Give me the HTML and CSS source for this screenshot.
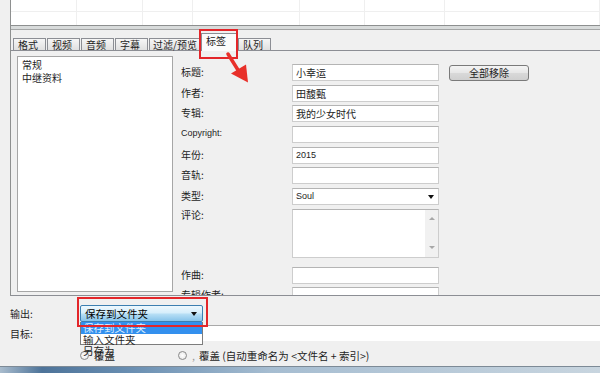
FILE: index.html
```html
<!DOCTYPE html>
<html lang="zh-CN">
<head>
    <meta charset="UTF-8">
    <meta name="viewport" content="width=device-width, initial-scale=1.0">
    <title>标签</title>
    <link rel="stylesheet" href="styles.css">
</head>
<body>
    <div class="window">
        <div class="main">
            <div class="file-grid">
                <span></span><span></span><span></span><span></span><span></span><span></span><span></span>
                <span></span><span></span><span></span><span></span><span></span><span></span><span></span>
            </div>
            <div class="splitter"></div>
            <div class="tab-bar">
                <div class="tab">格式</div>
                <div class="tab">视频</div>
                <div class="tab">音频</div>
                <div class="tab">字幕</div>
                <div class="tab wide">过滤/预览</div>
                <div class="tab active">标签<span class="mark-box tab-mark"></span></div>
                <div class="tab">队列</div>
            </div>
            <div class="tab-panel">
                <ul class="side-list">
                    <li>常规</li>
                    <li>中继资料</li>
                </ul>
                <div class="tag-form">
                    <div class="button">全部移除</div>
                    <label>标题:</label><div class="field">小幸运</div>
                    <label>作者:</label><div class="field">田馥甄</div>
                    <label>专辑:</label><div class="field">我的少女时代</div>
                    <label class="latin">Copyright:</label><div class="field"></div>
                    <label>年份:</label><div class="field latin">2015</div>
                    <label>音轨:</label><div class="field"></div>
                    <label>类型:</label><div class="field select latin">Soul<span class="caret"></span></div>
                    <label class="top">评论:</label>
                    <div class="field memo">
                        <div class="scrollbar"><span class="up"></span><span class="down"></span></div>
                    </div>
                    <label>作曲:</label><div class="field"></div>
                    <label>专辑作者:</label><div class="field"></div>
                </div>
            </div>
        </div>

        <div class="output">
            <div class="out-row">
                <label>输出:</label>
                <div class="combo-wrap">
                    <div class="combo">保存到文件夹<span class="caret"></span></div>
                    <ul class="drop-list">
                        <li class="hl">保存到文件夹</li>
                        <li>输入文件夹</li>
                        <li class="spill">另存为</li>
                    </ul>
                    <span class="mark-box combo-mark"></span>
                </div>
            </div>
            <div class="out-row target-row">
                <label>目标:</label>
                <div class="target"></div>
            </div>
            <div class="radio-row">
                <div class="radio-item first"><span class="radio"></span>覆盖</div>
                <div class="radio-item"><span class="radio"></span><span class="dim">,</span>覆盖 (自动重命名为 &lt;文件名 + 索引&gt;)</div>
            </div>
        </div>
        <div class="taskbar"></div>

        <svg class="arrow" viewBox="220 48 40 40" width="40" height="40">
            <line x1="228" y1="54" x2="238" y2="70" stroke="#e8302a" stroke-width="3.5" stroke-linecap="round"/>
            <polygon points="231,73.5 246,64.5 248,82.5" fill="#e8302a"/>
        </svg>
    </div>
</body>
</html>
```

FILE: styles.css
```css
body {
    margin: 0;
    background-color: #f0f0f0;
    font-family: "Noto Sans CJK SC", "Liberation Sans", sans-serif;
    font-size: 10px;
    color: #1e1e1e;
}

.window {
    position: relative;
    width: 600px;
    height: 373px;
    display: flex;
    flex-direction: column;
    overflow: hidden;
}

.main {
    margin-left: 10px;
    border-left: 1px solid #8e9090;
}

.file-grid {
    height: 25px;
    background-color: #fff;
    display: grid;
    grid-template-columns: 66px 66px 50px 107px 65px 80px 1fr;
    grid-template-rows: 12px 13px;
}

.file-grid span {
    border-right: 1px solid #efefef;
    border-bottom: 1px solid #efefef;
}

.file-grid span:nth-child(n+8) {
    border-bottom: none;
}

.splitter {
    height: 3px;
    background-color: #d8dbdb;
    border-top: 1px solid #8d8f8f;
    border-bottom: 1px solid #a4a6a6;
}

.tab-bar {
    height: 20px;
    display: flex;
    align-items: flex-end;
    padding-left: 2px;
}

.tab {
    position: relative;
    width: 33px;
    height: 12px;
    line-height: 11px;
    padding-left: 4px;
    margin-right: 1px;
    box-sizing: border-box;
    border: 1px solid #8c8e94;
    border-bottom: none;
    background: linear-gradient(#f6f6f6, #e0e0e0);
    white-space: nowrap;
}

.tab.wide {
    width: 51px;
    padding-left: 3px;
}

.tab.active {
    width: 37px;
    height: 18px;
    line-height: 13px;
    margin-bottom: -1px;
    margin-right: 0;
    background: #fbfbfb;
    z-index: 1;
}

.mark-box {
    position: absolute;
    border: 2px solid #e3262a;
    box-sizing: border-box;
    z-index: 3;
}

.tab-mark {
    left: -3px;
    top: -5px;
    width: 39px;
    height: 30px;
}

.tab-panel {
    height: 246px;
    box-sizing: border-box;
    border-top: 1px solid #8c8e94;
    border-bottom: 1px solid #8c8e94;
    display: flex;
    overflow: hidden;
}

.side-list {
    width: 156px;
    height: 236px;
    margin: 5px 0 0 6px;
    padding: 1px 0 0;
    box-sizing: border-box;
    list-style: none;
    background-color: #fff;
    border: 1px solid #a6a6a6;
}

.side-list li {
    height: 13px;
    line-height: 13px;
    padding-left: 4px;
}

.tag-form {
    margin-left: 8px;
    padding-top: 13px;
    display: grid;
    grid-template-columns: 101px 147px 80px;
    grid-template-rows: repeat(7, 17px) 54px 17px 17px;
    column-gap: 10px;
    row-gap: 3.7px;
    align-content: start;
}

.tag-form label {
    grid-column: 1;
    line-height: 15px;
    align-self: center;
    padding-bottom: 2px;
    white-space: nowrap;
}

.tag-form label.top {
    align-self: start;
    line-height: 12px;
    padding: 0;
}

.latin {
    font-family: "Liberation Sans", "Noto Sans CJK SC", sans-serif;
    font-size: 9px;
}

.field {
    grid-column: 2;
    height: 17px;
    line-height: 15px;
    padding-left: 3px;
    box-sizing: border-box;
    background-color: #fff;
    border: 1px solid #cdcdcd;
    border-top-color: #b4b4b4;
}

.field.select {
    display: flex;
    justify-content: space-between;
    align-items: center;
}

.caret {
    width: 0;
    height: 0;
    border-left: 3px solid transparent;
    border-right: 3px solid transparent;
    border-top: 4px solid #111;
    margin-right: 4px;
}

.field.memo {
    height: 49px;
    padding: 0;
    display: flex;
    justify-content: flex-end;
}

.scrollbar {
    width: 13px;
    background-color: #f1f1f1;
    display: flex;
    flex-direction: column;
    justify-content: space-between;
    align-items: center;
    padding: 7px 0 8px;
}

.scrollbar span {
    width: 0;
    height: 0;
    border-left: 3px solid transparent;
    border-right: 3px solid transparent;
}

.scrollbar .up {
    border-bottom: 3px solid #a8a8a8;
}

.scrollbar .down {
    border-top: 3px solid #a8a8a8;
}

.button {
    grid-column: 3;
    grid-row: 1;
    height: 16px;
    margin-top: 1px;
    box-sizing: border-box;
    border: 1px solid #7a7a7a;
    border-radius: 3px;
    background: linear-gradient(#f4f4f4, #e6e6e6 50%, #d9d9d9 51%, #cfcfcf);
    text-align: center;
    line-height: 14px;
}

.output {
    flex: 1;
    padding-top: 9px;
}

.out-row {
    display: flex;
    align-items: center;
    height: 17px;
}

.out-row label {
    width: 70px;
    padding-left: 10px;
}

.combo-wrap {
    position: relative;
    width: 123px;
    height: 17px;
}

.combo {
    height: 17px;
    box-sizing: border-box;
    padding-left: 4px;
    line-height: 15px;
    font-size: 10.5px;
    color: #000;
    border: 1px solid #3c7fb1;
    border-radius: 2px;
    background: linear-gradient(#eef8fe, #d6eefb 45%, #b5def5 55%, #86c3ea);
    display: flex;
    justify-content: space-between;
    align-items: center;
}

.combo .caret {
    margin-right: 5px;
}

.combo-mark {
    left: -3px;
    top: -8px;
    width: 131px;
    height: 30px;
}

.drop-list {
    position: absolute;
    left: 0;
    top: 17px;
    width: 123px;
    height: 23px;
    margin: 0;
    padding: 0;
    list-style: none;
    box-sizing: border-box;
    background-color: #fff;
    border: 1px solid #7d7d7d;
    border-top: none;
    z-index: 2;
}

.drop-list li {
    height: 11.5px;
    line-height: 11px;
    padding-left: 2px;
    font-size: 10.5px;
}

.drop-list li.hl {
    background-color: #3390ee;
    color: #dfefff;
}

.target-row {
    margin-top: 3px;
    height: 16px;
}

.target {
    flex: 1;
    height: 16px;
    box-sizing: border-box;
    background-color: #fff;
    border-top: 1px solid #a9a9a9;
}

.radio-row {
    display: flex;
    align-items: center;
    height: 16px;
    margin-top: 6px;
    padding-left: 80px;
    font-size: 10.5px;
}

.radio-item {
    display: flex;
    align-items: center;
}

.radio-item.first {
    width: 98px;
}

.radio {
    width: 7px;
    height: 7px;
    margin-right: 5px;
    border: 1px solid #8a8a8a;
    border-radius: 50%;
    background: radial-gradient(#fff, #e4e4e4);
}

.dim {
    color: #9a9a9a;
    margin-right: 4px;
}

.taskbar {
    height: 6px;
    border-top: 1px solid #7d8a96;
    background: linear-gradient(90deg, #a9bccd, #4d7399 7%, #6a8fb2 22%, #a6bdd1 45%, #c8d5df);
}

.arrow {
    position: absolute;
    left: 220px;
    top: 48px;
    z-index: 4;
}
```
